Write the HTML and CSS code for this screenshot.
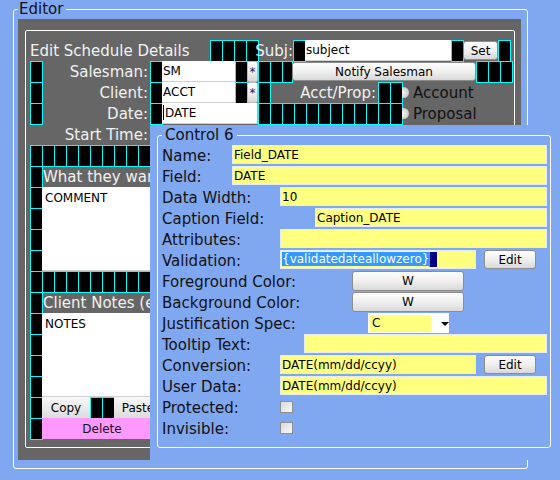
FILE: index.html
```html
<!DOCTYPE html>
<html lang="en">
<head>
  <meta charset="UTF-8" />
  <title>Editor</title>
  <link rel="stylesheet" href="styles.css">
</head>
<body>

  <fieldset class="editor">
    <legend>Editor</legend>
    <div class="panel">
      <div class="sched">

        <div class="row">
          <span class="title">Edit Schedule Details</span>
          <i class="c"></i><i class="c"></i><i class="c"></i><i class="c"></i>
          <span class="lbl subj">Subj:</span>
          <i class="c"></i>
          <input class="txt subject" type="text" value="subject" />
          <i class="c"></i>
          <button class="btn set">Set</button>
          <i class="c"></i>
        </div>

        <div class="row">
          <i class="c"></i>
          <span class="lbl">Salesman:</span>
          <i class="c"></i>
          <input class="txt short" type="text" value="SM" />
          <i class="c"></i>
          <button class="btn star">*</button>
          <i class="c"></i><i class="c"></i><i class="c narrow"></i>
          <button class="btn notify">Notify Salesman</button>
          <i class="c"></i><i class="c"></i><i class="c"></i>
        </div>

        <div class="row">
          <i class="c"></i>
          <span class="lbl">Client:</span>
          <i class="c"></i>
          <input class="txt short" type="text" value="ACCT" />
          <i class="c"></i>
          <button class="btn star">*</button>
          <i class="c"></i>
          <span class="lbl">Acct/Prop:</span>
          <i class="c"></i><i class="c"></i>
          <span class="radio"></span>
          <span class="opt">Account</span>
        </div>

        <div class="row">
          <i class="c"></i>
          <span class="lbl">Date:</span>
          <i class="c"></i>
          <div class="txt date"><span class="cursor"></span>DATE</div>
          <i class="c"></i><i class="c"></i><i class="c"></i><i class="c"></i>
          <i class="c"></i><i class="c"></i><i class="c"></i><i class="c"></i>
          <i class="c"></i><i class="c"></i><i class="c"></i><i class="c"></i>
          <span class="radio"></span>
          <span class="opt">Proposal</span>
        </div>

        <div class="row">
          <span class="lbl wide">Start Time:</span>
        </div>

        <div class="row">
          <i class="c"></i><i class="c"></i><i class="c"></i><i class="c"></i>
          <i class="c"></i><i class="c"></i><i class="c"></i><i class="c"></i>
          <i class="c"></i><i class="c"></i><i class="c"></i><i class="c"></i>
          <i class="c"></i><i class="c"></i><i class="c"></i><i class="c"></i>
        </div>

        <div class="row">
          <i class="c"></i>
          <span class="head">What they want</span>
        </div>

        <div class="memo-row">
          <div class="stack"><i class="c"></i><i class="c"></i><i class="c"></i><i class="c"></i></div>
          <textarea class="memo">COMMENT</textarea>
        </div>

        <div class="row">
          <i class="c"></i><i class="c"></i><i class="c"></i><i class="c"></i>
          <i class="c"></i><i class="c"></i><i class="c"></i><i class="c"></i>
          <i class="c"></i><i class="c"></i><i class="c"></i><i class="c"></i>
          <i class="c"></i><i class="c"></i><i class="c"></i><i class="c"></i>
        </div>

        <div class="row">
          <i class="c"></i>
          <span class="head">Client Notes (e.g.)</span>
        </div>

        <div class="memo-row">
          <div class="stack"><i class="c"></i><i class="c"></i><i class="c"></i><i class="c"></i></div>
          <textarea class="memo">NOTES</textarea>
        </div>

        <div class="row">
          <i class="c"></i>
          <button class="btn flat copy">Copy</button>
          <i class="c"></i><i class="c"></i>
          <button class="btn flat paste">Paste</button>
        </div>

        <div class="row">
          <i class="c"></i>
          <button class="delete">Delete</button>
        </div>

      </div>
    </div>
  </fieldset>

  <div class="dialog">
    <fieldset class="ctl">
      <legend>Control 6</legend>

      <div class="frow">
        <span class="flbl w70">Name:</span>
        <input class="fld full" type="text" value="Field_DATE" />
      </div>
      <div class="frow">
        <span class="flbl w70">Field:</span>
        <input class="fld full" type="text" value="DATE" />
      </div>
      <div class="frow">
        <span class="flbl w118">Data Width:</span>
        <input class="fld full" type="text" value="10" />
      </div>
      <div class="frow">
        <span class="flbl w153">Caption Field:</span>
        <input class="fld full" type="text" value="Caption_DATE" />
      </div>
      <div class="frow">
        <span class="flbl w118">Attributes:</span>
        <input class="fld full" type="text" value="" />
      </div>
      <div class="frow">
        <span class="flbl w118">Validation:</span>
        <div class="fld half"><span class="sel">{validatedateallowzero}</span><span class="caret"></span></div>
        <button class="btn edit">Edit</button>
      </div>
      <div class="frow">
        <span class="flbl w190">Foreground Color:</span>
        <button class="btn color">W</button>
      </div>
      <div class="frow">
        <span class="flbl w190">Background Color:</span>
        <button class="btn color">W</button>
      </div>
      <div class="frow">
        <span class="flbl w206">Justification Spec:</span>
        <div class="pick"><span class="pick-val">C</span><span class="pick-arrow"></span></div>
      </div>
      <div class="frow">
        <span class="flbl w142">Tooltip Text:</span>
        <input class="fld full" type="text" value="" />
      </div>
      <div class="frow">
        <span class="flbl w118">Conversion:</span>
        <input class="fld half" type="text" value="DATE(mm/dd/ccyy)" />
        <button class="btn edit">Edit</button>
      </div>
      <div class="frow">
        <span class="flbl w118">User Data:</span>
        <input class="fld full" type="text" value="DATE(mm/dd/ccyy)" />
      </div>
      <div class="frow">
        <span class="flbl w118">Protected:</span>
        <span class="chk"></span>
      </div>
      <div class="frow">
        <span class="flbl w118">Invisible:</span>
        <span class="chk"></span>
      </div>
    </fieldset>
  </div>

</body>
</html>
```

FILE: styles.css
```css
:root {
  --bg: #80a8f0;
  --panel: #666666;
  --grid: #00ffff;
  --field: #ffff80;
  --pink: #ff99ff;
  --light: #f2f2f2;
}
body {
  margin: 0;
  background-color: var(--bg);
  font-family: "DejaVu Sans", Verdana, sans-serif;
  font-size: 15px;
  color: #111;
}
fieldset {
  box-sizing: border-box;
  border: 1px solid #fff;
  border-radius: 3px;
  min-width: 0;
}
legend {
  line-height: 18px;
  padding: 0 3px 0 1px;
}

/* outer editor frame */
fieldset.editor {
  width: 515px;
  margin: 0 0 0 13px;
  padding: 1px 5px 8px 4px;
}
.panel {
  width: 503px;
  height: 441px;
  box-sizing: border-box;
  padding: 11px 6px 12px 7px;
  background: var(--panel);
}
.sched {
  height: 100%;
  box-sizing: border-box;
  border: 1px solid #fff;
  border-radius: 2px;
  padding: 9px 0 0 4px;
  overflow: hidden;
}
.row {
  display: flex;
  height: 21px;
}
.row > *, .memo-row > * {
  flex: none;
}

/* black layout cells */
.c {
  display: block;
  flex: none;
  width: 13px;
  height: 22px;
  box-sizing: border-box;
  background: #000;
  border: 1px solid var(--grid);
  margin: 0 -1px -1px 0;
}
.c.narrow { width: 11px; }

.title {
  width: 180px;
  color: var(--light);
  line-height: 22px;
  white-space: nowrap;
}
.lbl {
  display: flex;
  justify-content: flex-end;
  width: 108px;
  box-sizing: border-box;
  padding-right: 2px;
  color: var(--light);
  line-height: 22px;
  white-space: nowrap;
}
.lbl.subj { width: 35px; padding-right: 0; }
.lbl.wide { width: 120px; }
.head {
  width: 108px;
  overflow: hidden;
  color: var(--light);
  line-height: 22px;
  padding-left: 1px;
  white-space: nowrap;
}
.opt {
  line-height: 22px;
  color: #111;
}
.radio {
  width: 7px;
  height: 11px;
  margin: 5px 4px 0 0;
  border-radius: 0 6px 6px 0;
  background: radial-gradient(circle at 0 50%, #fafafa, #b8b8b8);
}

.txt {
  height: 21px;
  box-sizing: border-box;
  margin: 0;
  border: 0;
  border-bottom: 1px solid #d0d0d0;
  padding: 0 1px;
  background: #fff;
  color: #000;
  font: 12px "DejaVu Sans", Verdana, sans-serif;
  line-height: 20px;
  outline: none;
}
.txt.subject { width: 146px; }
.txt.short { width: 73px; }
.txt.date { width: 96px; border-right: 1px solid var(--grid); }
.cursor {
  display: inline-block;
  width: 1px;
  height: 15px;
  margin-right: 1px;
  vertical-align: -3px;
  background: #000;
}

.btn {
  box-sizing: border-box;
  margin: 1px 0;
  padding: 0;
  border: 1px solid #8c8c8c;
  border-radius: 3px;
  background: linear-gradient(#fdfdfd, #eeeeee 55%, #d8d8d8);
  color: #000;
  font: 12px "DejaVu Sans", Verdana, sans-serif;
}
.btn.set { width: 35px; }
.btn.star { width: 11px; margin: 0; border-radius: 2px; border-color: #bbb; color: #225; }
.btn.notify { width: 184px; }
.btn.flat { margin: 0; border: 0; border-radius: 0; background: linear-gradient(#f8f8f8, #dcdcdc); }
.btn.copy { width: 48px; }
.btn.paste { width: 48px; }
.delete {
  width: 120px;
  height: 21px;
  margin: 0;
  border: 0;
  padding: 0;
  background: var(--pink);
  color: #111;
  font: 12px "DejaVu Sans", Verdana, sans-serif;
}

.memo-row {
  display: flex;
  height: 84px;
}
.stack {
  display: flex;
  flex-direction: column;
}
.stack .c { height: 22px; }
.memo {
  width: 220px;
  height: 84px;
  box-sizing: border-box;
  margin: 0;
  border: 0;
  border-bottom: 1px solid #d0d0d0;
  padding: 4px 3px;
  resize: none;
  background: #fff;
  color: #000;
  font: 12px "DejaVu Sans", Verdana, sans-serif;
}

/* control properties dialog */
.dialog {
  position: absolute;
  left: 150px;
  top: 125px;
  width: 410px;
  height: 335px;
  background: var(--bg);
}
fieldset.ctl {
  width: 394px;
  margin: 1px 0 0 7px;
  padding: 1px 0 8px 4px;
}
fieldset.ctl legend { padding: 0 3px; }
.frow {
  display: flex;
  align-items: flex-start;
  height: 21px;
}
.frow > * { flex: none; }
.flbl {
  line-height: 22px;
  white-space: nowrap;
}
.w70 { width: 70px; }
.w118 { width: 118px; }
.w142 { width: 142px; }
.w153 { width: 153px; }
.w190 { width: 190px; }
.w206 { width: 206px; }

.fld {
  box-sizing: border-box;
  height: 19px;
  margin: 0;
  padding: 0 1px;
  border: 1px solid #e4ecfa;
  background: var(--field);
  color: #000;
  font: 12px "DejaVu Sans", Verdana, sans-serif;
  line-height: 17px;
  outline: none;
  white-space: nowrap;
}
.fld.full { flex: 1; margin-right: 3px; }
.fld.half { width: 196px; }
.sel {
  background: #3399ff;
  color: #fff;
}
.caret {
  display: inline-block;
  width: 7px;
  height: 15px;
  vertical-align: top;
  margin-top: 1px;
  border-left: 1px solid #e07020;
  background: #000080;
}
.btn.edit { width: 52px; height: 19px; margin: 0 0 0 8px; }
.btn.color { width: 112px; height: 20px; margin: 0; }

.pick {
  display: flex;
  align-items: center;
  width: 81px;
  height: 20px;
  box-sizing: border-box;
  padding: 2px 0 1px 2px;
  background: #fff;
}
.pick-val {
  width: 61px;
  height: 17px;
  box-sizing: border-box;
  padding-left: 2px;
  background: var(--field);
  font-size: 12px;
  line-height: 17px;
  color: #000;
}
.pick-arrow {
  margin-left: 10px;
  border-left: 4px solid transparent;
  border-right: 4px solid transparent;
  border-top: 4px solid #000;
}
.chk {
  width: 13px;
  height: 12px;
  margin-top: 4px;
  box-sizing: border-box;
  border: 1px solid #8e8e8e;
  background: linear-gradient(135deg, #d8d8d8, #fafafa);
}
```
